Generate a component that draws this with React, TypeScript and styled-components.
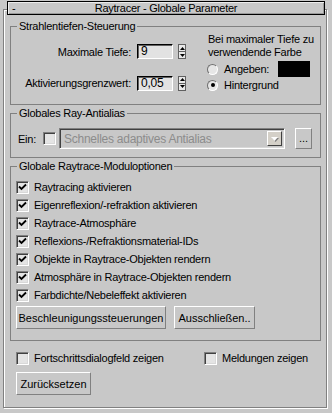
import React, { FC } from 'react'
import styled, { createGlobalStyle } from 'styled-components'

const GlobalStyle = createGlobalStyle`
  html, body {
    margin: 0;
    padding: 0;
    background: #c8c8c8;
  }
  body {
    font-family: "Liberation Sans", Arial, sans-serif;
    font-size: 11px;
    letter-spacing: -0.25px;
    color: #000;
  }
  * {
    box-sizing: border-box;
  }
`

const checkboxes = [
  'Raytracing aktivieren',
  'Eigenreflexion/-refraktion aktivieren',
  'Raytrace-Atmosphäre',
  'Reflexions-/Refraktionsmaterial-IDs',
  'Objekte in Raytrace-Objekten rendern',
  'Atmosphäre in Raytrace-Objekten rendern',
  'Farbdichte/Nebeleffekt aktivieren',
]

const CheckBox: FC<{ checked?: boolean }> = ({ checked }) => (
  <Box>
    {checked && (
      <svg width="9" height="9" viewBox="0 0 9 9">
        <path d="M1 3.5 L3.5 6 L8 1.5" stroke="#000" strokeWidth="1.8" fill="none" />
      </svg>
    )}
  </Box>
)

const Spinner: FC = () => (
  <SpinBox>
    <SpinHalf>
      <svg width="5" height="3" viewBox="0 0 5 3">
        <path d="M2.5 0 L5 3 L0 3 Z" fill="#000" />
      </svg>
    </SpinHalf>
    <SpinHalf>
      <svg width="5" height="3" viewBox="0 0 5 3">
        <path d="M0 0 L5 0 L2.5 3 Z" fill="#000" />
      </svg>
    </SpinHalf>
  </SpinBox>
)

const App: FC = () => {
  return (
    <Page>
      <GlobalStyle />
      <Rollout>
        <TitleBar>
          <Minus>-</Minus>
          <Title>Raytracer - Globale Parameter</Title>
          <span />
        </TitleBar>

        <Group>
          <Legend>Strahlentiefen-Steuerung</Legend>
          <DepthBody>
            <SpinGrid>
              <FieldLabel>Maximale Tiefe:</FieldLabel>
              <Field>9</Field>
              <Spinner />
              <FieldLabel>Aktivierungsgrenzwert:</FieldLabel>
              <Field>0,05</Field>
              <Spinner />
            </SpinGrid>
            <ColorColumn>
              <Note>
                Bei maximaler Tiefe zu
                <br />
                verwendende Farbe
              </Note>
              <RadioRow>
                <Radio />
                <RadioLabel>Angeben:</RadioLabel>
                <Swatch />
              </RadioRow>
              <RadioRow>
                <Radio selected />
                <RadioLabel>Hintergrund</RadioLabel>
              </RadioRow>
            </ColorColumn>
          </DepthBody>
        </Group>

        <Group>
          <Legend>Globales Ray-Antialias</Legend>
          <AntialiasRow>
            <span>Ein:</span>
            <CheckBox />
            <Dropdown>
              <DropText>Schnelles adaptives Antialias</DropText>
              <DropArrow>
                <svg width="7" height="4" viewBox="0 0 7 4">
                  <path d="M0 0 L7 0 L3.5 4 Z" fill="#fff" />
                </svg>
              </DropArrow>
            </Dropdown>
            <SmallButton>...</SmallButton>
          </AntialiasRow>
        </Group>

        <Group>
          <Legend>Globale Raytrace-Moduloptionen</Legend>
          <OptionList>
            {checkboxes.map((label) => (
              <CheckRow key={label}>
                <CheckBox checked />
                <span>{label}</span>
              </CheckRow>
            ))}
          </OptionList>
          <ButtonRow>
            <Button width={150}>Beschleunigungssteuerungen</Button>
            <Button width={81}>Ausschließen..</Button>
          </ButtonRow>
        </Group>

        <BottomChecks>
          <CheckRow>
            <CheckBox />
            <span>Fortschrittsdialogfeld zeigen</span>
          </CheckRow>
          <CheckRow>
            <CheckBox />
            <span>Meldungen zeigen</span>
          </CheckRow>
        </BottomChecks>
        <ResetRow>
          <Button width={75}>Zurücksetzen</Button>
        </ResetRow>
      </Rollout>
    </Page>
  )
}

export default App

const Page = styled.div`
  width: 332px;
  height: 413px;
  padding-top: 9px;
  overflow: hidden;
`

const Rollout = styled.div`
  margin-left: 3px;
  width: 324px;
  height: 399px;
  border: 1px solid #808080;
  box-shadow: inset 1px 1px 0 #fff, 1px 1px 0 #fff;
  padding: 0 5px 0 6px;
`

const TitleBar = styled.div`
  margin: -9px -4px 0 -3px;
  height: 14px;
  border: 1px solid #000;
  background: #c8c8c8;
  box-shadow: inset 1px 1px 0 #ececec, inset -1px -1px 0 #9a9a9a;
  display: grid;
  grid-template-columns: 20px 1fr 20px;
  align-items: center;
  line-height: 12px;
`

const Minus = styled.span`
  padding-left: 4px;
`

const Title = styled.span`
  text-align: center;
`

const Group = styled.fieldset`
  margin: 5px 0 0 0;
  padding: 0;
  border: 1px solid #808080;
  min-width: 0;

  & + & {
    margin-top: 2px;
  }
`

const Legend = styled.legend`
  margin-left: 6px;
  padding: 0 2px;
  line-height: 13px;
`

const DepthBody = styled.div`
  display: flex;
  padding: 0 0 11px 0;
`

const SpinGrid = styled.div`
  display: grid;
  grid-template-columns: 120px 36px 8px;
  column-gap: 6px;
  row-gap: 12px;
  align-items: center;
  padding-top: 9px;
  & > *:nth-child(3n + 3) {
    margin-left: -1px;
  }
`

const FieldLabel = styled.span`
  text-align: right;
`

const Field = styled.div`
  height: 15px;
  background: #e2e2e2;
  border: 1px solid;
  border-color: #000 #fff #fff #000;
  box-shadow: inset 1px 1px 0 #606060;
  padding-left: 3px;
  font-size: 12px;
  line-height: 13px;
`

const SpinBox = styled.div`
  width: 8px;
  height: 15px;
  display: flex;
  flex-direction: column;
  border: 1px solid #606060;
  background: #e8e8e8;
`

const SpinHalf = styled.div`
  flex: 1;
  display: flex;
  align-items: center;
  justify-content: center;
  & + & {
    border-top: 1px solid #606060;
  }
`

const ColorColumn = styled.div`
  margin-left: 21px;
  line-height: 13px;
`

const Note = styled.div`
  margin-bottom: 2px;
`

const RadioRow = styled.div`
  display: flex;
  align-items: center;
  height: 16px;
`

const Radio = styled.span<{ selected?: boolean }>`
  width: 11px;
  height: 11px;
  margin-left: -1px;
  border-radius: 50%;
  border: 1px solid;
  border-color: #707070 #fff #fff #707070;
  background: #e6e6e6;
  display: flex;
  align-items: center;
  justify-content: center;
  &::after {
    content: '';
    width: 4px;
    height: 4px;
    border-radius: 50%;
    background: ${(p) => (p.selected ? '#000' : 'transparent')};
  }
`

const RadioLabel = styled.span`
  margin-left: 6px;
  min-width: 54px;
`

const Swatch = styled.div`
  width: 32px;
  height: 16px;
  background: #000;
`

const AntialiasRow = styled.div`
  display: flex;
  align-items: center;
  padding: 8px 0 8px 7px;
  & > span:first-child {
    margin-right: 7px;
  }
`

const Box = styled.span`
  width: 13px;
  height: 13px;
  flex: none;
  border: 1px solid;
  border-color: #808080 #fff #fff #808080;
  box-shadow: inset 1px 1px 0 #404040, inset -1px -1px 0 #d8d8d8;
  background: #e4e4e4;
  display: flex;
  align-items: center;
  justify-content: center;
`

const Dropdown = styled.div`
  margin-left: 3px;
  width: 226px;
  height: 21px;
  border: 1px solid;
  border-color: #808080 #fff #fff #808080;
  box-shadow: inset 1px 1px 0 #404040, inset -1px -1px 0 #d8d8d8;
  background: #c8c8c8;
  display: flex;
  align-items: center;
  padding: 2px;
`

const DropText = styled.span`
  flex: 1;
  padding-left: 2px;
  color: #8c8c8c;
  font-size: 12px;
`

const DropArrow = styled.span`
  width: 15px;
  height: 15px;
  background: #d4d0c8;
  border: 1px solid;
  border-color: #fff #404040 #404040 #fff;
  display: flex;
  align-items: center;
  justify-content: center;
  & svg {
    filter: drop-shadow(1px 1px 0 #808080);
  }
`

const SmallButton = styled.button`
  margin-left: 10px;
  width: 17px;
  height: 21px;
  padding: 0 0 4px;
  border: 1px solid;
  border-color: #fff #808080 #808080 #fff;
  background: #c8c8c8;
  font: inherit;
  color: #000;
  display: flex;
  align-items: flex-end;
  justify-content: center;
`

const OptionList = styled.div`
  padding: 5px 0 0 5px;
`

const CheckRow = styled.div`
  display: flex;
  align-items: center;
  height: 18px;
  gap: 5px;
  white-space: nowrap;
`

const ButtonRow = styled.div`
  display: flex;
  gap: 8px;
  padding: 2px 0 11px 5px;
`

const Button = styled.button<{ width: number }>`
  width: ${(p) => p.width}px;
  height: 23px;
  padding: 0;
  border: 1px solid;
  border-color: #fff #808080 #808080 #fff;
  background: #c8c8c8;
  font: inherit;
  color: #000;
`

const BottomChecks = styled.div`
  display: grid;
  grid-template-columns: 188px 1fr;
  padding: 8px 0 0 6px;
`

const ResetRow = styled.div`
  padding: 5px 0 0 6px;
`
